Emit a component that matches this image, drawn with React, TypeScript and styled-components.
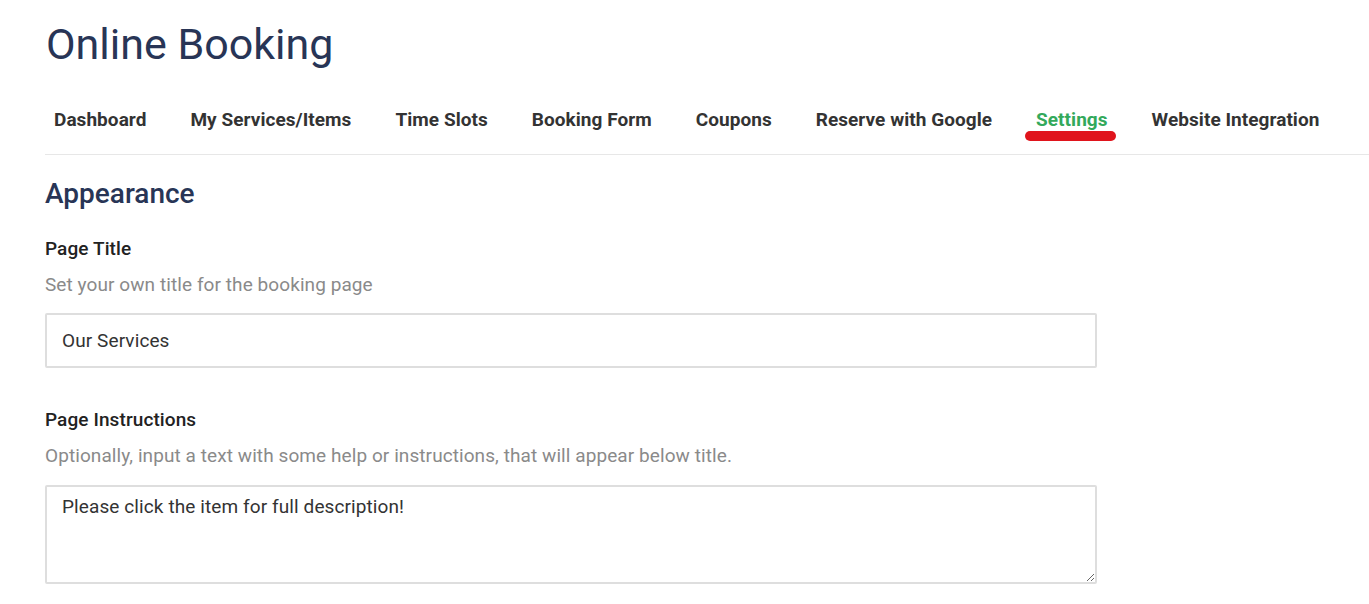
import React from "react";
import styled, { createGlobalStyle } from "styled-components";

const GlobalStyle = createGlobalStyle`
  html, body {
    margin: 0;
    padding: 0;
    background: #fff;
    font-family: Roboto, "Liberation Sans", Arial, sans-serif;
  }
`;

const Page = styled.div`
  padding-left: 45px;
  overflow: hidden;
`;

const Title = styled.h1`
  margin: 18px 0 0 1px;
  font-size: 43px;
  line-height: 52px;
  font-weight: 400;
  color: #283556;
`;

const Nav = styled.nav`
  display: flex;
  gap: 26px;
  margin-top: 38px;
  border-bottom: 1px solid #e7e7e7;
`;

const NavItem = styled.a<{ $active?: boolean }>`
  position: relative;
  padding: 0 9px 22px;
  font-size: 19px;
  line-height: 24px;
  font-weight: 700;
  letter-spacing: 0.05px;
  white-space: nowrap;
  text-decoration: none;
  color: ${(p) => (p.$active ? "#33a95b" : "#333333")};
  cursor: pointer;
`;

const Marker = styled.span`
  position: absolute;
  left: -2px;
  right: 1px;
  top: 23px;
  height: 10px;
  border-radius: 6px;
  background: #e0141c;
`;

const Section = styled.section`
  max-width: 1052px;
`;

const Heading = styled.h2`
  margin: 22px 0 0;
  font-size: 28px;
  line-height: 34px;
  font-weight: 500;
  color: #283556;
`;

const Field = styled.div<{ $first?: boolean }>`
  display: flex;
  flex-direction: column;
  margin-top: ${(p) => (p.$first ? "26px" : "40px")};
`;

const Label = styled.label`
  font-size: 19px;
  line-height: 24px;
  font-weight: 500;
  letter-spacing: 0.1px;
  color: #222;
`;

const Hint = styled.div`
  margin-top: 12px;
  font-size: 19px;
  line-height: 24px;
  letter-spacing: 0.08px;
  color: #8a8a8a;
`;

const TextInput = styled.input`
  box-sizing: border-box;
  margin-top: 16px;
  width: 100%;
  height: 55px;
  padding: 0 15px;
  border: 2px solid #dedede;
  border-radius: 2px;
  font-family: inherit;
  font-size: 19px;
  letter-spacing: 0.1px;
  color: #333;
  outline: none;
`;

const TextArea = styled.textarea`
  box-sizing: border-box;
  margin-top: 17px;
  width: 100%;
  height: 99px;
  padding: 8px 15px;
  border: 2px solid #dedede;
  border-radius: 2px;
  font-family: inherit;
  font-size: 19px;
  line-height: 24px;
  letter-spacing: 0.1px;
  color: #333;
  outline: none;
  resize: vertical;
`;

const tabs = [
  "Dashboard",
  "My Services/Items",
  "Time Slots",
  "Booking Form",
  "Coupons",
  "Reserve with Google",
  "Settings",
  "Website Integration",
];

export default function App() {
  const [title, setTitle] = React.useState("Our Services");
  const [instructions, setInstructions] = React.useState(
    "Please click the item for full description!"
  );

  return (
    <Page>
      <GlobalStyle />
      <Title>Online Booking</Title>
      <Nav>
        {tabs.map((t) => (
          <NavItem key={t} $active={t === "Settings"}>
            {t}
            {t === "Settings" && <Marker />}
          </NavItem>
        ))}
      </Nav>
      <Section>
        <Heading>Appearance</Heading>
        <Field $first>
          <Label>Page Title</Label>
          <Hint>Set your own title for the booking page</Hint>
          <TextInput value={title} onChange={(e) => setTitle(e.target.value)} />
        </Field>
        <Field>
          <Label>Page Instructions</Label>
          <Hint>
            Optionally, input a text with some help or instructions, that will
            appear below title.
          </Hint>
          <TextArea
            value={instructions}
            onChange={(e) => setInstructions(e.target.value)}
          />
        </Field>
      </Section>
    </Page>
  );
}
